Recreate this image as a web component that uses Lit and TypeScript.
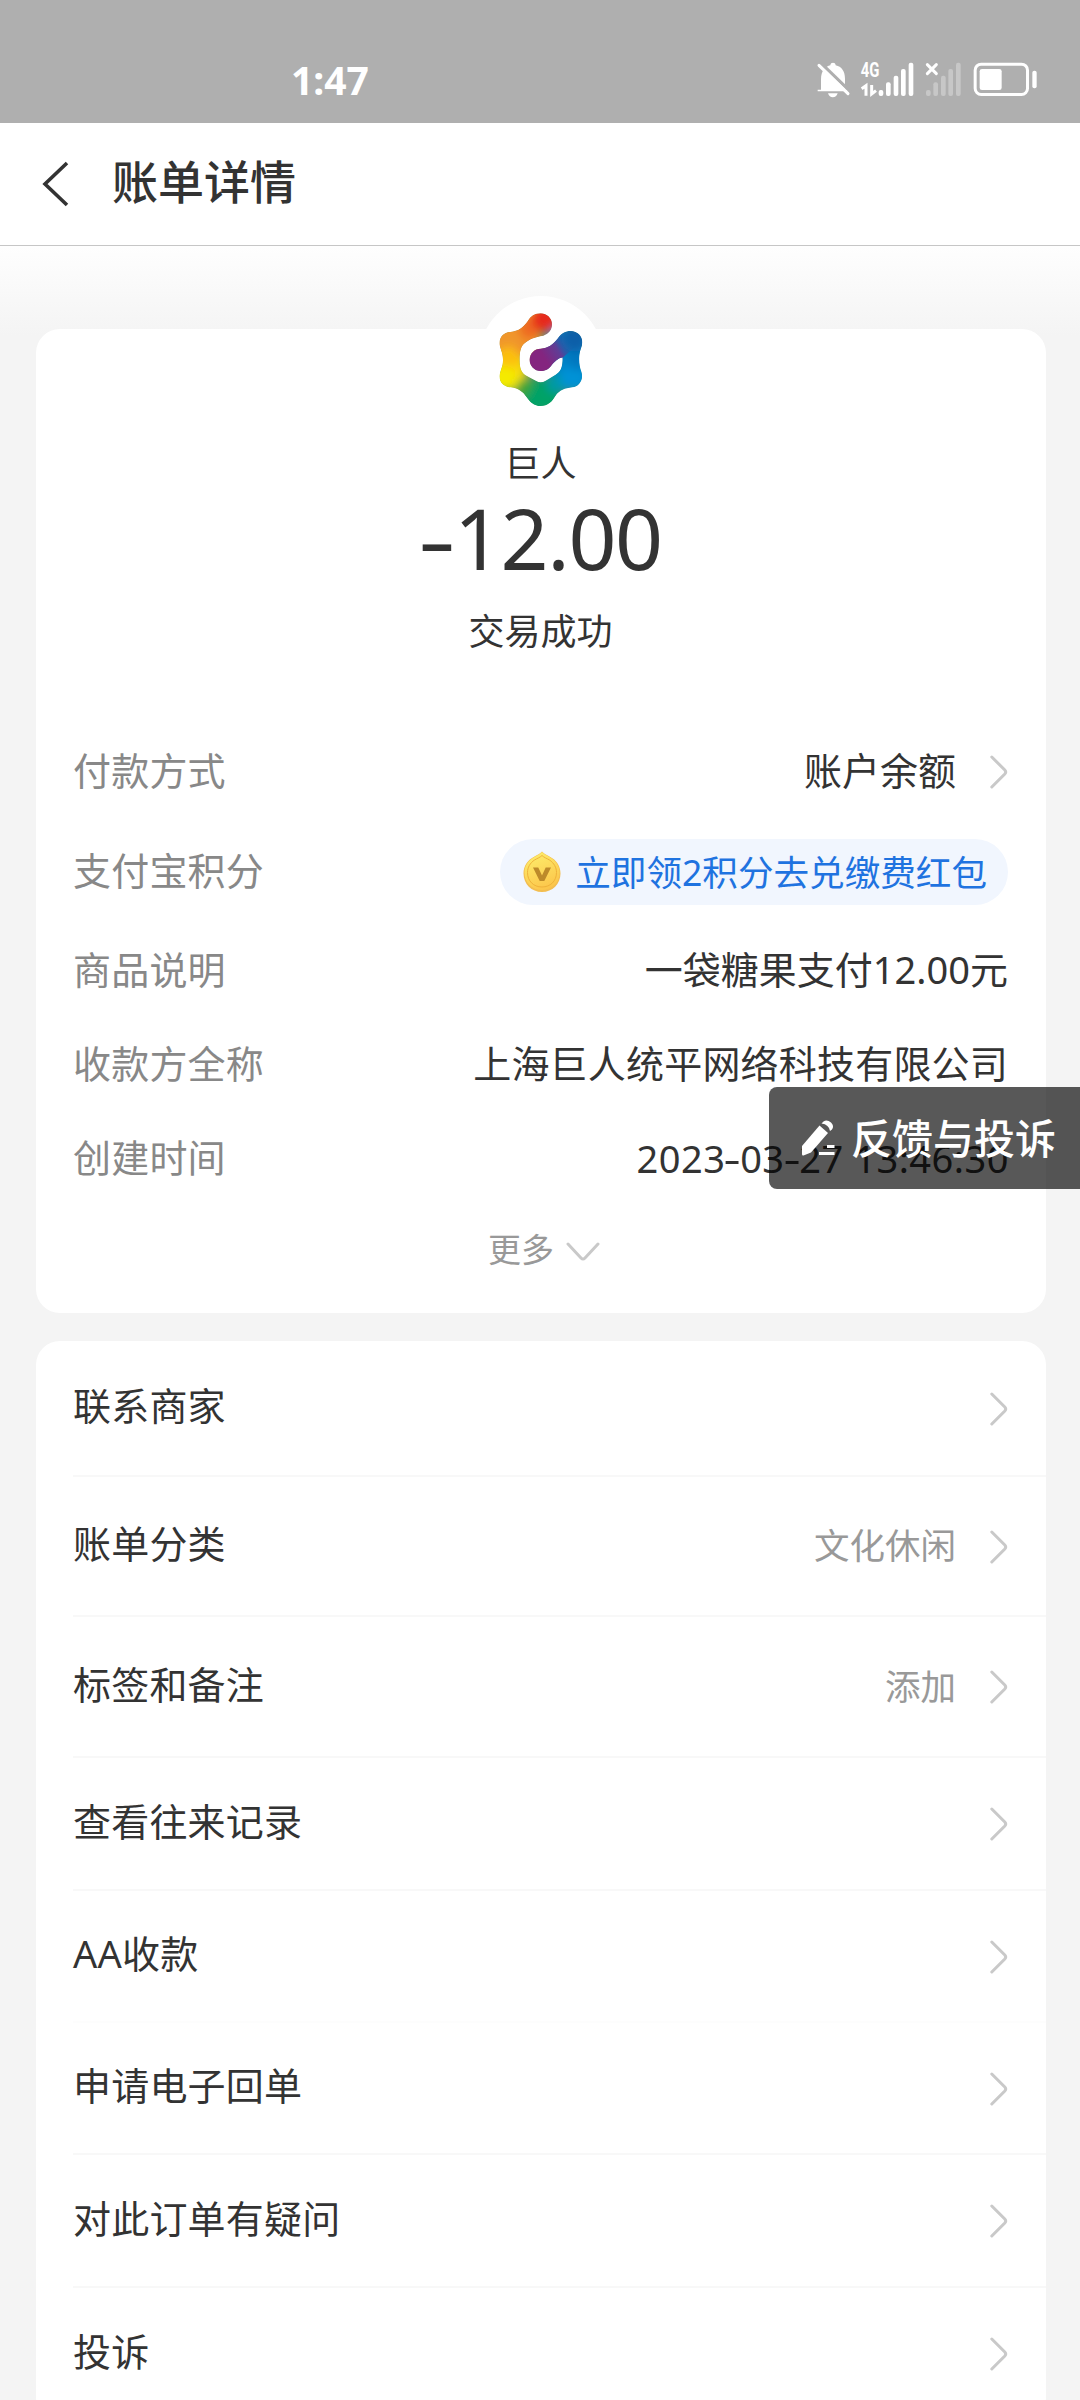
import { LitElement, html, svg, css, nothing } from "lit";
import { customElement, property } from "lit/decorators.js";

interface MenuRow {
  label: string;
  value?: string;
  height: number;
}

const MENU: MenuRow[] = [
  { label: "联系商家", height: 136 },
  { label: "账单分类", value: "文化休闲", height: 140 },
  { label: "标签和备注", value: "添加", height: 141 },
  { label: "查看往来记录", height: 133 },
  { label: "AA收款", height: 132 },
  { label: "申请电子回单", height: 132 },
  { label: "对此订单有疑问", height: 133 },
  { label: "投诉", height: 133 },
];

const LOGO_PATH =
  "M303 100C322 100 337 115 337 133C337 150 326 162 312 167C285 171 268 178 255 190C243 200 240 215 240 240C240 262 243 275 258 286L290 303Q303 311 318 302L348 284C362 276 369 265 369 232C355 234 345 245 334 258C328 267 316 273 303 273C284 273 270 258 270 240C270 220 285 206 303 206C325 204 340 195 355 175C365 160 378 153 393 153C413 153 428 168 428 187C428 200 420 212 419 225C417 245 420 262 425 275C433 298 418 320 398 322C375 325 360 330 347 348C337 365 325 378 303 378C283 378 270 365 260 350C250 336 238 326 213 322C190 320 178 305 180 285C182 270 190 260 190 240C190 222 184 212 180 195C177 172 192 157 212 156C236 154 250 143 264 124C273 108 285 100 303 100Z";

const LOGO_BLOBS: [number, number, number, string][] = [
  [270, 145, 32, "#ee6a22"],
  [315, 116, 40, "#e62a1e"],
  [205, 180, 40, "#f0962a"],
  [205, 235, 34, "#fcc00a"],
  [195, 295, 38, "#f4ea06"],
  [258, 325, 28, "#3fa535"],
  [303, 352, 40, "#00a266"],
  [350, 310, 30, "#0099a5"],
  [400, 290, 40, "#0092d6"],
  [412, 240, 30, "#0078c0"],
  [405, 175, 40, "#0b5fa8"],
];

const chevronRight = html`<svg class="chev" width="18" height="34" viewBox="0 0 18 34">
  <path d="M1.8 2L14.8 15Q16.6 17 14.8 19L1.8 32" fill="none" stroke="#c9c9c9" stroke-width="3" stroke-linecap="round" />
</svg>`;

@customElement("status-bar")
export class StatusBar extends LitElement {
  static styles = css`
    :host {
      display: flex;
      justify-content: space-between;
      height: 123px;
      box-sizing: border-box;
      padding: 0 43px 0 291px;
      background: #afafaf;
      color: #fff;
    }
    .time {
      font-size: 39px;
      line-height: 54px;
      font-weight: 700;
      padding-top: 53px;
    }
    .icons {
      display: flex;
      padding-top: 62px;
    }
    .icons svg {
      overflow: visible;
    }
    .net {
      font-family: "Roboto", "Noto Sans", sans-serif;
      font-size: 58px;
      font-weight: 700;
    }
  `;
  render() {
    const bars = [
      [304, 150],
      [326, 127],
      [349, 107],
      [371, 87],
      [394, 68],
    ];
    return html`
      <div class="time">1:47</div>
      <div class="icons">
        <svg width="220" height="37" viewBox="112 66 660 111">
          <path d="M114 149H206V154H114ZM124 149V118C124 92 138 79 152 76C152 66 168 66 168 76C186 80 196 94 196 116V149Z" fill="#fff" />
          <path d="M120 66L212 155" stroke="#afafaf" stroke-width="10" />
          <path d="M118 76L205 161" stroke="#fff" stroke-width="9" stroke-linecap="round" />
          <path d="M145 160H174Q170 172 159.500 172Q149 172 145 160Z" fill="#fff" />
          <text class="net" x="243" y="111" textLength="56" lengthAdjust="spacingAndGlyphs" fill="#fff">4G</text>
          <path d="M246 146L259 137V167M276 135V162L289 152" fill="none" stroke="#fff" stroke-width="9" />
          ${bars.map(([x, y]) => svg`<rect x=${x - 7} y=${y} width="14" height=${168 - y} rx="6" fill="#fff"/>`)}
          ${bars.map(([x, y]) => svg`<rect x=${x + 135} y=${y} width="14" height=${168 - y} rx="6" fill="#c7c7c7"/>`)}
          <path d="M443 74L470 101M470 74L443 101" stroke="#fff" stroke-width="9" stroke-linecap="round" />
          <rect x="586.500" y="72.500" width="157" height="91" rx="18" fill="none" stroke="#fff" stroke-width="9" />
          <rect x="600" y="87" width="66" height="63" rx="7" fill="#fff" />
          <rect x="758" y="92" width="13" height="53" rx="6" fill="#fff" />
        </svg>
      </div>
    `;
  }
}

@customElement("detail-row")
export class DetailRow extends LitElement {
  @property() label = "";
  static styles = css`
    :host {
      display: flex;
      align-items: center;
      justify-content: space-between;
      height: 94px;
      color: #333;
    }
    .label {
      color: #888;
      padding-bottom: 4px;
      letter-spacing: 0.2px;
    }
  `;
  render() {
    return html`<span class="label">${this.label}</span><slot></slot>`;
  }
}

@customElement("menu-row")
export class MenuRowElement extends LitElement {
  @property() label = "";
  @property() value?: string;
  static styles = css`
    :host {
      display: flex;
      align-items: center;
      box-sizing: border-box;
      margin-left: 37px;
      padding-right: 38px;
      border-bottom: 2px solid #f8f8f8;
      color: #333;
    }
    :host(.faint) {
      border-color: #fdfdfd;
    }
    .label {
      flex: 1;
      padding-bottom: 6px;
      letter-spacing: 0.2px;
    }
    .value {
      color: #999;
      font-size: 35.5px;
      padding: 0 34px 2px 0;
    }
    .chev {
      display: block;
      margin-top: 1px;
    }
  `;
  render() {
    return html`
      <span class="label">${this.label}</span>
      ${this.value ? html`<span class="value">${this.value}</span>` : nothing} ${chevronRight}
    `;
  }
}

@customElement("app-root")
export class AppRoot extends LitElement {
  static styles = css`
    :host {
      display: block;
      position: relative;
      width: 1080px;
      height: 2400px;
      overflow: hidden;
      background: #f4f4f4;
      font-family: "Noto Sans", "Noto Sans CJK SC", sans-serif;
      font-size: 38px;
      line-height: 50px;
      color: #333;
    }
    .header {
      display: flex;
      align-items: center;
      height: 123px;
      box-sizing: border-box;
      padding: 0 0 6px 41px;
      gap: 41px;
      background: #fff;
      border-bottom: 1px solid #c6c6c6;
    }
    .back {
      display: block;
      margin-top: 5px;
    }
    .title {
      font-size: 46px;
      line-height: 60px;
      font-weight: 500;
    }
    .body {
      display: flex;
      flex-direction: column;
      gap: 28px;
      padding: 83px 34px 0 36px;
      background: linear-gradient(#fefefe, #f4f4f4 90px);
    }
    .card {
      background: #fff;
      border-radius: 24px;
    }
    .summary {
      height: 984px;
      box-sizing: border-box;
      padding: 0 38px 0 37px;
    }
    .payee {
      display: flex;
      flex-direction: column;
      align-items: center;
      height: 396px;
    }
    .avatar {
      display: flex;
      align-items: center;
      justify-content: center;
      width: 124px;
      height: 124px;
      margin-top: -33px;
      border-radius: 50%;
      background: #fff;
      flex: none;
    }
    .name {
      font-size: 36px;
      line-height: 48px;
      margin-top: 20px;
    }
    .amount {
      font-size: 84px;
      line-height: 100px;
      letter-spacing: -1.4px;
      display: flex;
      padding-left: 5px;
    }
    .dash {
      display: inline-block;
      transform: scaleX(1.4);
    }
    .amount .dash {
      padding-right: 4px;
    }
    .state {
      font-size: 36px;
      line-height: 48px;
      margin-top: 20px;
    }
    .more {
      display: flex;
      align-items: center;
      justify-content: center;
      gap: 12px;
      margin-top: 19px;
      padding-left: 7px;
      font-size: 33px;
      color: #999;
    }
    .more svg {
      margin-top: 4px;
    }
    .linked {
      display: flex;
      align-items: center;
      gap: 34px;
    }
    .up {
      padding-bottom: 4px;
    }
    .company {
      letter-spacing: 0.2px;
    }
    .date {
      letter-spacing: 0.5px;
      margin-right: -1px;
      padding-bottom: 2px;
    }
    .date .dash {
      margin: 0 1px;
    }
    .points-row {
      height: 105px;
    }
    .pill {
      display: flex;
      align-items: center;
      height: 66px;
      box-sizing: border-box;
      padding: 0 21px 0 23px;
      gap: 14px;
      border-radius: 33px;
      background: #f1f6fe;
      color: #1f73e0;
      font-size: 35.6px;
    }
    .pill .up {
      padding-bottom: 0;
    }
    .feedback {
      position: absolute;
      right: 0;
      top: 1087px;
      display: flex;
      align-items: center;
      width: 311px;
      height: 102px;
      box-sizing: border-box;
      padding-left: 31px;
      gap: 15px;
      border-radius: 8px 0 0 8px;
      background: rgba(0, 0, 0, 0.655);
      color: #fff;
      font-size: 41px;
      font-weight: 500;
    }
  `;

  private logo() {
    return html`<svg width="90" height="100" viewBox="169 84 270 300">
      <defs>
        <clipPath id="shape"><path d=${LOGO_PATH} /></clipPath>
        <filter id="soft" x="-20%" y="-20%" width="140%" height="140%"><feGaussianBlur stdDeviation="12" /></filter>
        <linearGradient id="arm" gradientUnits="userSpaceOnUse" x1="315" y1="235" x2="395" y2="185">
          <stop offset="0" stop-color="#84257f" />
          <stop offset="0.5" stop-color="#5f3d96" />
          <stop offset="1" stop-color="#0b5fa8" stop-opacity="0" />
        </linearGradient>
      </defs>
      <g clip-path="url(#shape)">
        <path d=${LOGO_PATH} fill="#4a8f6a" />
        <g filter="url(#soft)">
          <rect x="150" y="70" width="155" height="160" fill="#f0922a" />
          <rect x="150" y="230" width="110" height="100" fill="#f8d808" />
          <rect x="330" y="140" width="120" height="190" fill="#0080c4" />
          <rect x="240" y="300" width="120" height="90" fill="#00a060" />
          ${LOGO_BLOBS.map(([x, y, r, c]) => svg`<circle cx=${x} cy=${y} r=${r} fill=${c}/>`)}
        </g>
        <path d="M265 200L320 198L360 140L430 180L372 230L335 280H265Z" fill="url(#arm)" />
      </g>
    </svg>`;
  }

  render() {
    return html`
      <status-bar></status-bar>
      <div class="header">
        <svg class="back" width="30" height="46" viewBox="0 0 30 46">
          <path d="M26 2L4 23L26 44" fill="none" stroke="#333" stroke-width="3.600" />
        </svg>
        <span class="title">账单详情</span>
      </div>
      <div class="body">
        <div class="card summary">
          <div class="payee">
            <div class="avatar">${this.logo()}</div>
            <div class="name">巨人</div>
            <div class="amount"><span class="dash">-</span><span>12.00</span></div>
            <div class="state">交易成功</div>
          </div>
          <detail-row label="付款方式">
            <div class="linked"><span class="up">账户余额</span>${chevronRight}</div>
          </detail-row>
          <detail-row class="points-row" label="支付宝积分">
            <div class="pill">
              <svg width="38" height="42" viewBox="0 0 38 42">
                <defs>
                  <linearGradient id="coin" x1="0.200" y1="0" x2="0.600" y2="1">
                    <stop offset="0" stop-color="#fdee6c" />
                    <stop offset="1" stop-color="#fcc54a" />
                  </linearGradient>
                </defs>
                <path d="M19 .5C21 2.500 23.500 4 26.500 5.500C33.500 9 37.500 15 37.500 22.500C37.500 33 29.500 41 19 41S.5 33 .5 22.500C.5 15 4.500 9 11.500 5.500C14.500 4 17 2.500 19 .5Z" fill="#f3be50" />
                <path d="M19 1C21 3 23.500 4.500 26.500 6C33 9.500 36.500 15 36.500 21.500C36.500 31.500 29 39 19 39S1.500 31.500 1.500 21.500C1.500 15 5 9.500 11.500 6C14.500 4.500 17 3 19 1Z" fill="url(#coin)" />
                <path d="M19 4.500C21 6.500 24 7.500 26.500 9C31 12 33.500 16.500 33.500 21.500C33.500 30 27.500 36 19 36S4.500 30 4.500 21.500C4.500 16.500 7 12 11.500 9C14 7.500 17 6.500 19 4.500Z" fill="none" stroke="#efb23a" stroke-width="1" />
                <path d="M10 16.500H15.300L19 24.500L22.700 16.500H28L21.300 30H16.700Z" fill="#bd8a2a" />
              </svg>
              <span class="up">立即领2积分去兑缴费红包</span>
            </div>
          </detail-row>
          <detail-row label="商品说明"><span class="up">一袋糖果支付12.00元</span></detail-row>
          <detail-row label="收款方全称"><span class="up company">上海巨人统平网络科技有限公司</span></detail-row>
          <detail-row label="创建时间">
            <span class="date">2023<span class="dash">-</span>03<span class="dash">-</span>27 13:46:30</span>
          </detail-row>
          <div class="more">
            <span>更多</span>
            <svg width="34" height="20" viewBox="0 0 34 20">
              <path d="M2 2L15 16Q17 18 19 16L32 2" fill="none" stroke="#c9c9c9" stroke-width="3" stroke-linecap="round" />
            </svg>
          </div>
        </div>
        <div class="card">
          ${MENU.map(
            (row) => html`<menu-row
              class=${row.label === "AA收款" ? "faint" : ""}
              style="height:${row.height}px"
              .label=${row.label}
              .value=${row.value}
            ></menu-row>`
          )}
        </div>
      </div>
      <div class="feedback">
        <svg width="36" height="38" viewBox="0 0 36 38">
          <path d="M2 35V27L19.500 6.500L28 14L11 33.500L3.500 36.500Q2 37 2 35Z" fill="#fff" />
          <path d="M21.500 4.500L23.500 2.500Q27 0 31 3.500Q34.500 7 32 10.500L30 12Q29 5.500 21.500 4.500Z" fill="#fff" />
          <path d="M27 27.500H34.500M19 34.500H34.500" stroke="#fff" stroke-width="3.200" />
        </svg>
        <span>反馈与投诉</span>
      </div>
    `;
  }
}
